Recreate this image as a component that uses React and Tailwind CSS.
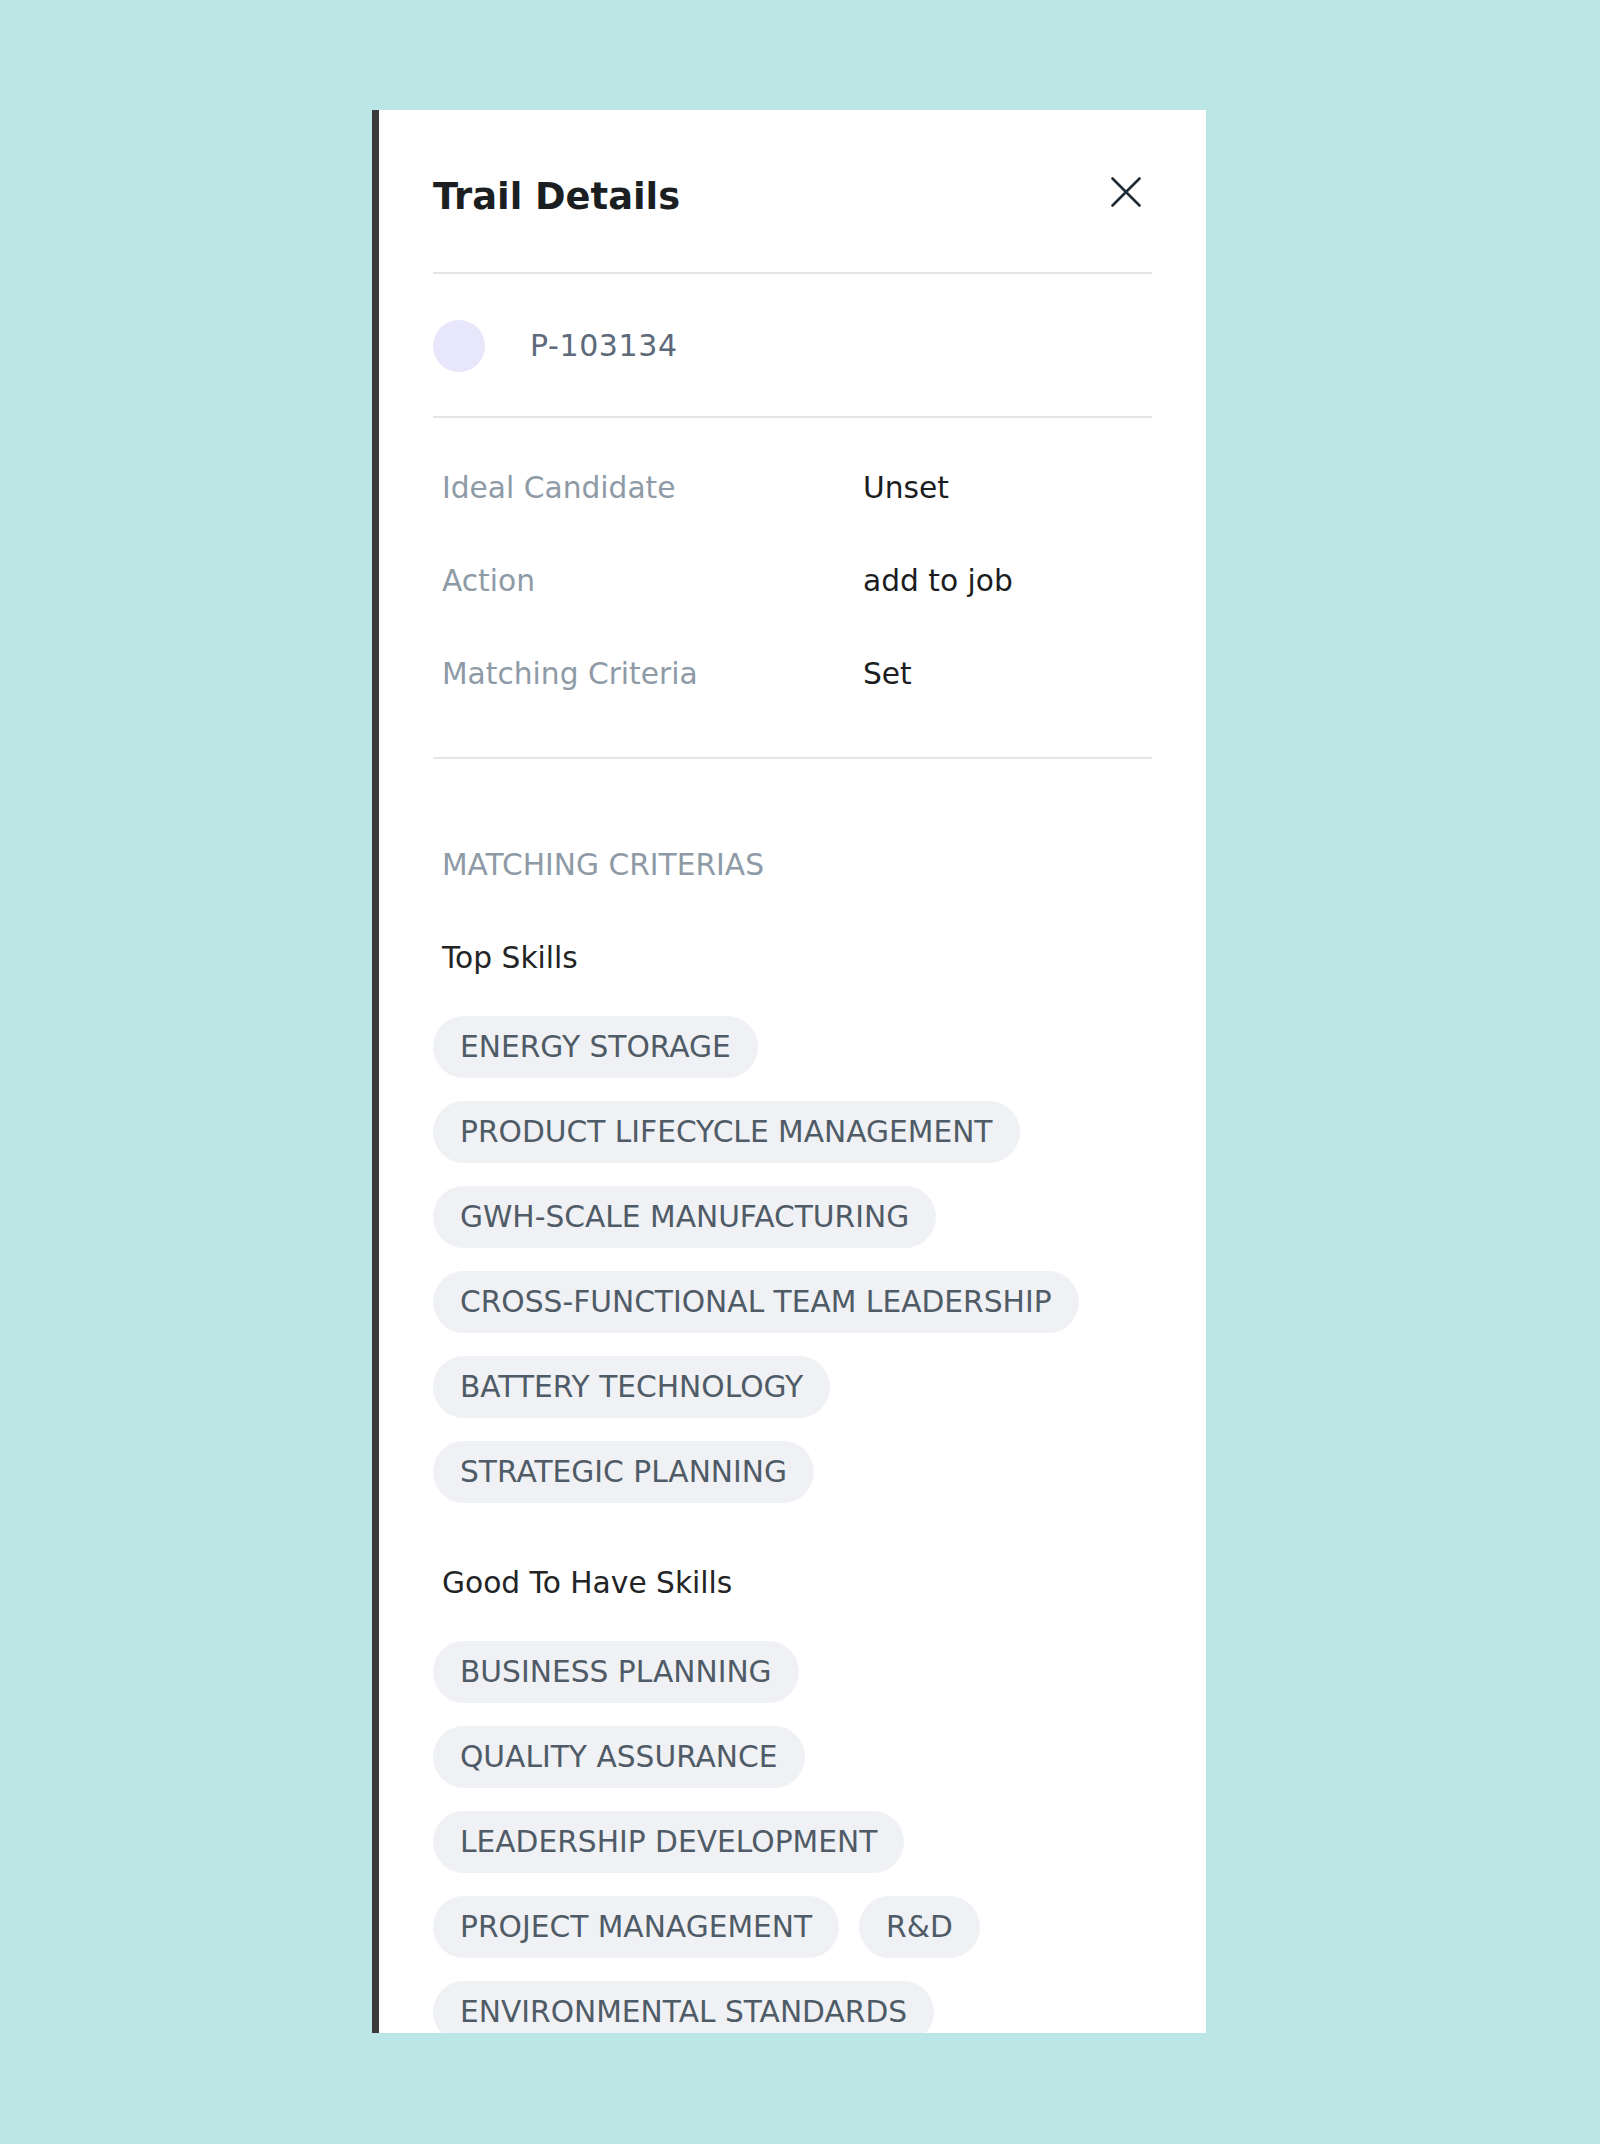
import React from "react";

const topSkills = [
  "ENERGY STORAGE",
  "PRODUCT LIFECYCLE MANAGEMENT",
  "GWH-SCALE MANUFACTURING",
  "CROSS-FUNCTIONAL TEAM LEADERSHIP",
  "BATTERY TECHNOLOGY",
  "STRATEGIC PLANNING",
];

const goodSkills = [
  "BUSINESS PLANNING",
  "QUALITY ASSURANCE",
  "LEADERSHIP DEVELOPMENT",
  "PROJECT MANAGEMENT",
  "R&D",
  "ENVIRONMENTAL STANDARDS",
];

function Chip({ label }) {
  return (
    <div className="flex h-[62px] items-center rounded-full bg-[#f0f1f4] px-[27px] text-[29.7px] leading-[40px] text-[#4f5b66]">
      {label}
    </div>
  );
}

function Row({ label, value }) {
  return (
    <div className="flex text-[29.7px] leading-[40px]">
      <div className="w-[421px] text-[#8e9ba6]">{label}</div>
      <div className="text-[#1b1d1f]">{value}</div>
    </div>
  );
}

export default function App() {
  return (
    <div className="min-h-[2144px] w-full bg-[#bce6e5] pl-[372px] pt-[110px] [font-family:'DejaVu_Sans',sans-serif]">
      <div className="h-[1923px] w-[834px] overflow-hidden border-l-[7px] border-[#3a3a3a] bg-white px-[54px] pt-[65px]">
        <div className="flex items-start justify-between">
          <h1 className="text-[36.8px] font-bold leading-[44px] text-[#1c1f22]">Trail Details</h1>
          <svg className="mr-[11px] mt-[2px]" width="30" height="30" viewBox="0 0 30 30" fill="none">
            <path d="M1.5 1.5 L28.5 28.5 M28.5 1.5 L1.5 28.5" stroke="#1e2b35" strokeWidth="2.6" strokeLinecap="round" />
          </svg>
        </div>
        <div className="mt-[53px] h-[2px] bg-[#e3e5e9]" />
        <div className="mt-[46px] flex h-[52px] items-center gap-[45px]">
          <div className="h-[52px] w-[52px] rounded-full bg-[#e8e6fa]" />
          <div className="text-[30px] leading-[40px] tracking-[0.6px] text-[#5d6a7a]">P-103134</div>
        </div>
        <div className="mt-[44px] h-[2px] bg-[#e3e5e9]" />
        <div className="mt-[50px] flex flex-col gap-[53px] pl-[9px]">
          <Row label="Ideal Candidate" value="Unset" />
          <Row label="Action" value="add to job" />
          <Row label="Matching Criteria" value="Set" />
        </div>
        <div className="mt-[63px] h-[2px] bg-[#e3e5e9]" />
        <div className="mt-[86px] pl-[9px] text-[29.7px] leading-[40px] text-[#8e9ba6]">MATCHING CRITERIAS</div>
        <div className="mt-[53px] pl-[9px] text-[29.7px] leading-[40px] text-[#222426]">Top Skills</div>
        <div className="mt-[38px] flex flex-wrap gap-x-[20px] gap-y-[23px]">
          {topSkills.map((s) => (
            <Chip key={s} label={s} />
          ))}
        </div>
        <div className="mt-[60px] pl-[9px] text-[29.7px] leading-[40px] text-[#222426]">Good To Have Skills</div>
        <div className="mt-[38px] flex flex-wrap gap-x-[20px] gap-y-[23px]">
          {goodSkills.map((s) => (
            <Chip key={s} label={s} />
          ))}
        </div>
      </div>
    </div>
  );
}
